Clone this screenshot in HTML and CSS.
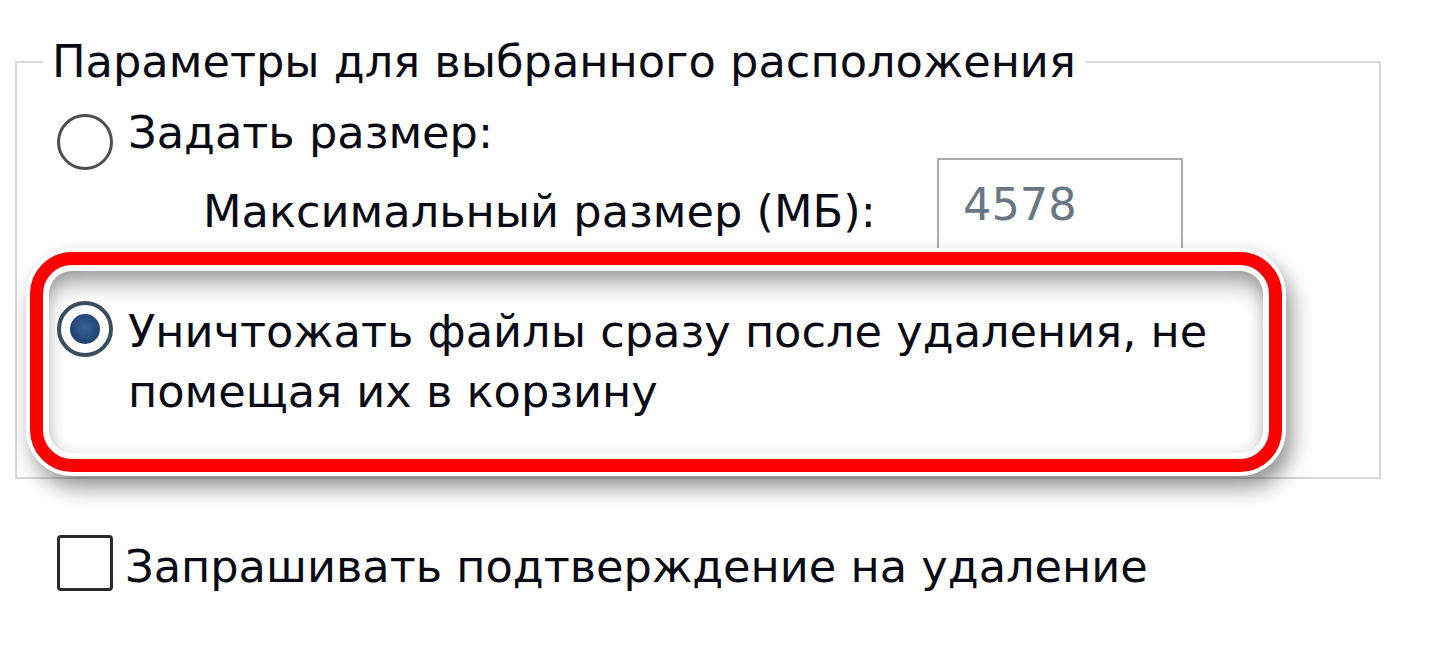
FILE: index.html
```html
<!DOCTYPE html>
<html lang="ru">
<head>
<meta charset="utf-8">
<title>Свойства корзины</title>
<link rel="stylesheet" href="styles.css">
</head>
<body>
<fieldset class="group">
  <legend class="group-title">Параметры для выбранного расположения</legend>
  <div class="group-body">
    <div class="row row-custom">
      <span class="radio"></span>
      <span class="label">Задать размер:</span>
    </div>
    <div class="row row-size">
      <span class="size-label">Максимальный размер (МБ):</span>
      <span class="size-input">4578</span>
    </div>
    <div class="highlight">
      <div class="row row-destroy">
        <span class="radio radio-checked"><span class="radio-dot"></span></span>
        <span class="label label-wide">Уничтожать файлы сразу после удаления, не<br>помещая их в корзину</span>
      </div>
    </div>
  </div>
</fieldset>
<div class="row row-confirm">
  <span class="checkbox"></span>
  <span class="label">Запрашивать подтверждение на удаление</span>
</div>
</body>
</html>
```
FILE: styles.css
```css
html, body {
  margin: 0;
  background: #fff;
}
body {
  width: 1429px;
  height: 645px;
  overflow: hidden;
  font-family: "DejaVu Sans", Tahoma, sans-serif;
  font-size: 44.7px;
  line-height: 52px;
  color: #0b0b16;
}
.group {
  margin: 32px 0 0 15px;
  padding: 0;
  width: 1366px;
  box-sizing: border-box;
  border: 2px solid #d7d7d7;
  min-inline-size: 0;
}
.group-title {
  margin-left: 26px;
  padding: 0 10px 0 9px;
  line-height: 60px;
}
.group-body {
  padding: 15px 0 5px 13px;
}
.row {
  display: flex;
  align-items: flex-start;
}
.row-custom {
  padding-left: 27px;
}
.radio {
  flex: none;
  width: 56px;
  height: 56px;
  box-sizing: border-box;
  border: 3px solid #4e4e4e;
  border-radius: 50%;
  background: #fff;
  margin-top: 7px;
  margin-right: 15px;
}
.row-size {
  padding-left: 173px;
}
.size-label {
  flex: 0 0 734px;
  margin-top: 16px;
}
.size-input {
  flex: none;
  width: 246px;
  height: 92px;
  box-sizing: border-box;
  margin-top: -12px;
  border: 2px solid #ababab;
  padding: 19px 0 0 24px;
  color: #6b7683;
  background: #fff;
}
.highlight {
  position: relative;
  z-index: 1;
  margin-top: 2px;
  width: 1252px;
  box-sizing: border-box;
  border: 13px solid #fd0000;
  border-radius: 42px;
  padding: 37px 0 37px 14px;
  background: #fff;
  box-shadow:
    0 0 0 4px #fff,
    6px 12px 22px 3px rgba(0, 0, 0, 0.45),
    inset 0 0 0 6px #fff,
    inset 0 18px 22px rgba(0, 0, 0, 0.36),
    inset 0 0 18px rgba(0, 0, 0, 0.24);
}
.row-destroy .radio {
  margin-top: -1px;
}
.label-wide {
  line-height: 60px;
}
.radio-checked {
  display: flex;
  align-items: center;
  justify-content: center;
  border: 4px solid #3a4c5d;
}
.radio-dot {
  width: 30px;
  height: 30px;
  border-radius: 50%;
  background: radial-gradient(circle at 50% 45%, #3a6394 0%, #25467a 60%, #1a3352 100%);
}
.row-confirm {
  margin: 56px 0 0 57px;
}
.checkbox {
  flex: none;
  width: 56px;
  height: 56px;
  box-sizing: border-box;
  border: 3px solid #2a2a2a;
  border-radius: 4px;
  background: #fff;
  margin-right: 12px;
}
.row-confirm .label {
  margin-top: 6px;
}
```
